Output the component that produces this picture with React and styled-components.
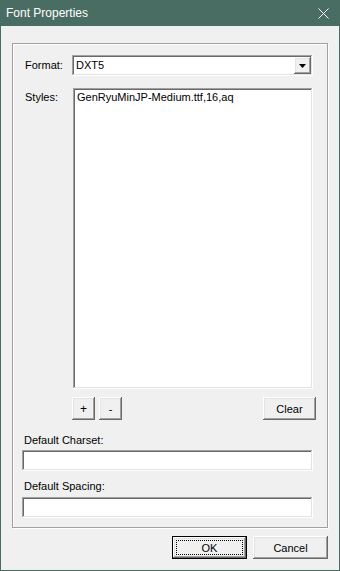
import React from "react";
import styled, { createGlobalStyle, css } from "styled-components";

const GlobalStyle = createGlobalStyle`
  html, body {
    margin: 0;
    padding: 0;
    background: #f0f0f0;
  }
  body {
    font-family: "Liberation Sans", Arial, sans-serif;
  }
`;

const raised = css`
  box-shadow: inset -1px -1px #696969, inset 1px 1px #ffffff,
    inset -2px -2px #a0a0a0, inset 2px 2px #e3e3e3;
`;

const sunken = css`
  box-shadow: inset -1px -1px #ffffff, inset 1px 1px #a0a0a0,
    inset -2px -2px #e3e3e3, inset 2px 2px #696969;
`;

const Window = styled.div`
  box-sizing: border-box;
  width: 340px;
  height: 571px;
  display: flex;
  flex-direction: column;
  background: #4a6d63;
  padding: 0 1px 1px 1px;
`;

const TitleBar = styled.div`
  height: 26px;
  flex: none;
  display: flex;
  align-items: center;
  justify-content: space-between;
  padding: 0 10px 0 5px;
  color: #ffffff;
  font-size: 12px;
`;

const Client = styled.div`
  flex: 1;
  display: flex;
  flex-direction: column;
  background: #f0f0f0;
  padding: 17px 11px 11px 11px;
  font-size: 11px;
  color: #000;
`;

const Group = styled.div`
  box-sizing: border-box;
  height: 485px;
  border: 1px solid #a0a0a0;
  box-shadow: inset 1px 1px 0 #ffffff, 1px 1px 0 #ffffff;
  padding: 11px 14px 0 9px;
  display: flex;
  flex-direction: column;
`;

const Row = styled.div`
  display: flex;
  align-items: ${(p) => (p.top ? "flex-start" : "center")};
  margin-top: ${(p) => p.gap || 0}px;
`;

const Label = styled.div`
  box-sizing: border-box;
  width: ${(p) => p.width || 50}px;
  padding-left: 3px;
  padding-top: ${(p) => p.padTop || 0}px;
  line-height: 13px;
  flex: none;
`;

const FieldLabel = styled.div`
  line-height: 13px;
  padding-left: 2px;
  margin-top: ${(p) => p.gap}px;
`;

const Combo = styled.div`
  box-sizing: border-box;
  width: 242px;
  height: 21px;
  background: #fff;
  ${sunken};
  display: flex;
  align-items: center;
  padding: 2px;
`;

const ComboText = styled.div`
  flex: 1;
  padding-left: 2px;
  line-height: 13px;
`;

const DropButton = styled.div`
  width: 17px;
  height: 17px;
  background: #f0f0f0;
  ${raised};
  display: flex;
  align-items: center;
  justify-content: center;
`;

const ListBox = styled.div`
  box-sizing: border-box;
  width: 240px;
  height: 301px;
  background: #fff;
  ${sunken};
  padding: 3px 4px;
  line-height: 13px;
`;

const Button = styled.div`
  box-sizing: border-box;
  position: relative;
  width: ${(p) => p.w}px;
  height: 23px;
  background: #f0f0f0;
  display: flex;
  align-items: center;
  justify-content: center;
  font-size: ${(p) => (p.big ? 12 : 11)}px;
  ${raised};
  ${(p) =>
    p.isDefault &&
    css`
      border: 1px solid #000;
      &::after {
        content: "";
        position: absolute;
        inset: 3px;
        border: 1px dotted #000;
      }
    `}
`;

const ButtonRow = styled.div`
  display: flex;
  align-items: center;
  gap: 4px;
  margin-top: 8px;
  padding-left: 50px;
`;

const Spacer = styled.div`
  flex: 1;
`;

const TextField = styled.div`
  box-sizing: border-box;
  height: 21px;
  width: 291px;
  background: #fff;
  margin-top: ${(p) => p.gap}px;
  ${sunken};
`;

const Footer = styled.div`
  display: flex;
  justify-content: flex-end;
  gap: 6px;
  margin-top: 8px;
`;

const CloseIcon = () => (
  <svg width="11" height="11" viewBox="0 0 11 11">
    <path d="M0.5 0.5 L10.5 10.5 M10.5 0.5 L0.5 10.5" stroke="#fff" strokeWidth="1" />
  </svg>
);

const DownArrow = () => (
  <svg width="7" height="4" viewBox="0 0 7 4">
    <path d="M0 0 H7 L3.5 4 Z" fill="#000" />
  </svg>
);

export default function App() {
  return (
    <>
      <GlobalStyle />
      <Window>
        <TitleBar>
          <span>Font Properties</span>
          <CloseIcon />
        </TitleBar>
        <Client>
          <Group>
            <Row>
              <Label>Format:</Label>
              <Combo>
                <ComboText>DXT5</ComboText>
                <DropButton>
                  <DownArrow />
                </DropButton>
              </Combo>
            </Row>
            <Row top gap={12}>
              <Label width={51} padTop={3}>
                Styles:
              </Label>
              <ListBox>GenRyuMinJP-Medium.ttf,16,aq</ListBox>
            </Row>
            <ButtonRow>
              <Button w={23} big>+</Button>
              <Button w={23}>-</Button>
              <Spacer />
              <Button w={53} style={{ marginRight: -3 }}>
                Clear
              </Button>
            </ButtonRow>
            <FieldLabel gap={14}>Default Charset:</FieldLabel>
            <TextField gap={3} />
            <FieldLabel gap={9}>Default Spacing:</FieldLabel>
            <TextField gap={4} />
          </Group>
          <Footer>
            <Button w={75} isDefault>
              OK
            </Button>
            <Button w={75}>Cancel</Button>
          </Footer>
        </Client>
      </Window>
    </>
  );
}
